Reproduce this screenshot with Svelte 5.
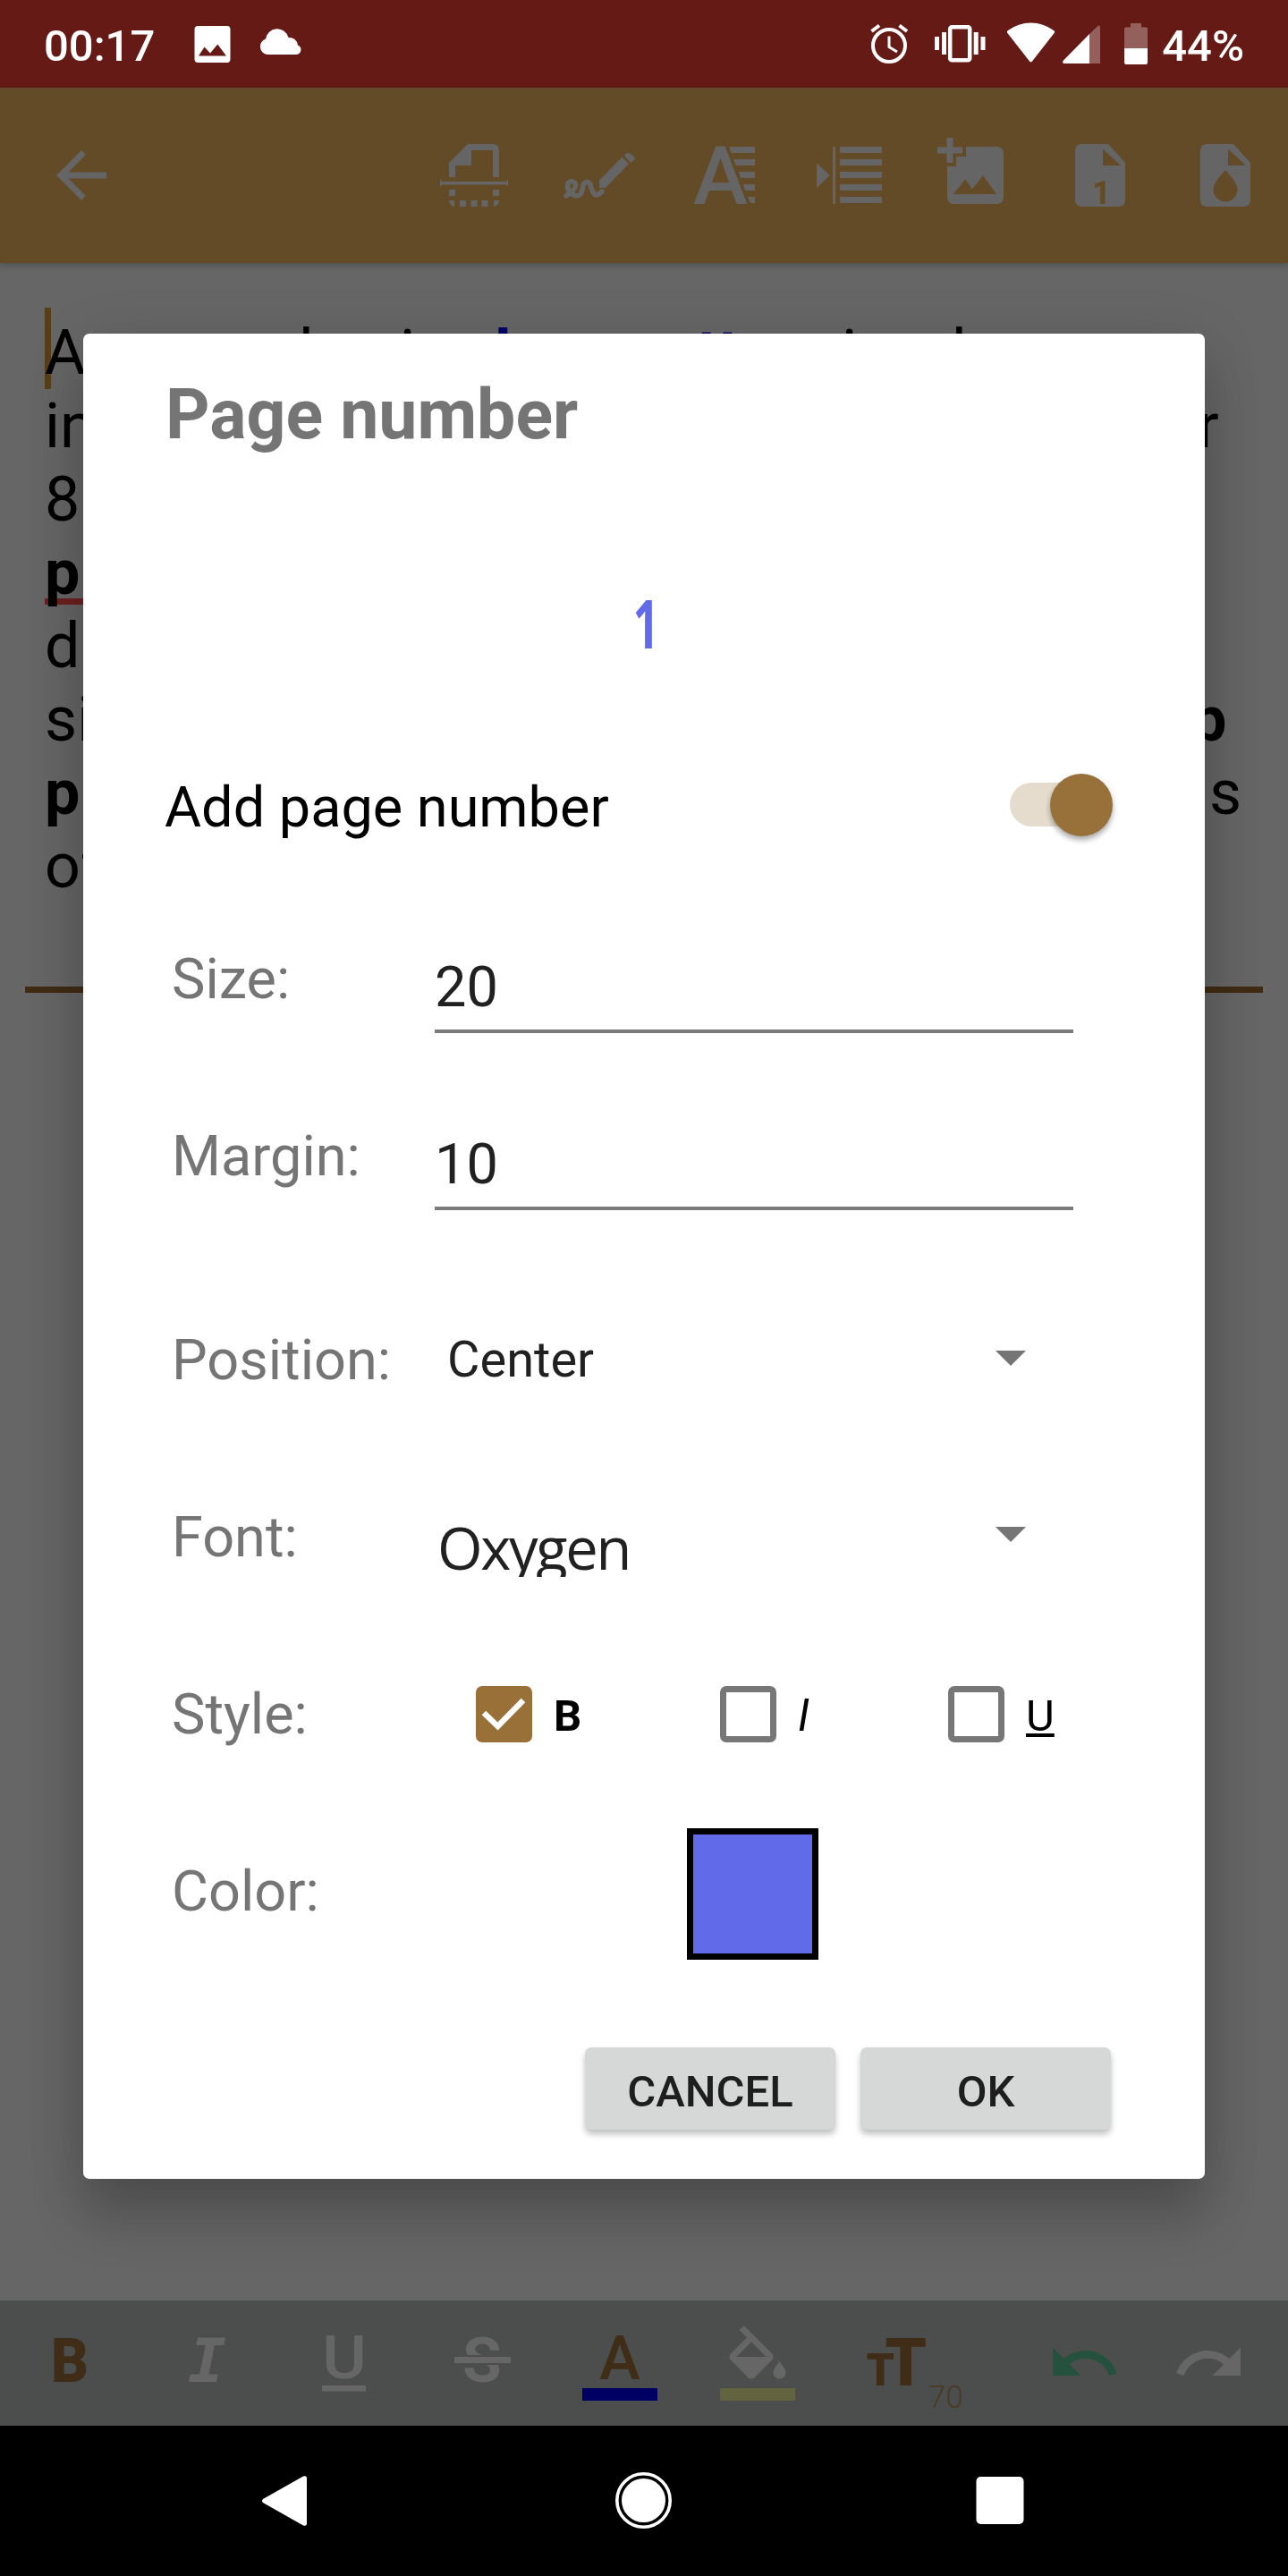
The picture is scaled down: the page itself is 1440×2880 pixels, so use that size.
<script lang="ts">
  let addNumber = true;
  let size = "20";
  let margin = "10";
  let position = "Center";
  let font = "Oxygen";
  let color = "#616bea";
  let styles = [
    { label: "B", cls: "bold", checked: true },
    { label: "I", cls: "italic", checked: false },
    { label: "U", cls: "underline", checked: false },
  ];

  // x is where each piece of a line starts on the page
  const lines = [
    [
      { x: 50, text: "A" },
      { x: 311, text: "d" },
      { x: 447, text: "i" },
      { x: 553, text: "l", cls: "link" },
      { x: 779, text: "tt", cls: "link" },
      { x: 941, text: "i" },
      { x: 1041, text: "d" },
    ],
    [{ x: 50, text: "in" }, { x: 1339, text: "r" }],
    [{ x: 50, text: "8" }],
    [{ x: 50, text: "p\u00a0", cls: "strong typo" }],
    [{ x: 50, text: "d" }],
    [{ x: 50, text: "si" }, { x: 1332, text: "p", cls: "strong" }],
    [{ x: 50, text: "p", cls: "strong" }, { x: 1352, text: "s" }],
    [{ x: 50, text: "of" }],
  ];
</script>

<div class="screen">
  <header class="status">
    <span class="clock">00:17</span>
    <svg class="picture" width="42" height="58" viewBox="216 20 42 58">
      <path fill-rule="evenodd" d="M221.500 29H253.500a4 4 0 0 1 4 4V66a4 4 0 0 1-4 4H221.500a4 4 0 0 1-4-4V33a4 4 0 0 1 4-4zM222 62.500H253L243.300 49.500L235 59.500L228.600 52.500z" />
    </svg>
    <svg class="cloud" width="50" height="58" viewBox="290 20 50 58">
      <path d="M299 61a9 9 0 0 1-2-17.500a13 13 0 0 1 25.500-1.500a9.500 9.500 0 0 1 10.500 8.500a5.500 5.500 0 0 1-1 10.500z" />
    </svg>
    <div class="system">
      <svg width="44" height="58" viewBox="972 20 44 58">
        <g fill="none" stroke="#fff" stroke-width="4">
          <circle cx="994" cy="51" r="18" />
          <path d="M974.500 35L983 28.500M1014 35L1005.500 28.500" />
          <path stroke-width="3" d="M994 40.500V52.500L1003 58" />
        </g>
      </svg>
      <svg width="58" height="58" viewBox="1044 20 58 58">
        <rect x="1062.200" y="30.200" width="22" height="37" rx="2" fill="none" stroke="#fff" stroke-width="4.500" />
        <path d="M1053 36h5v25h-5zM1045 41h5v15h-5zM1088.700 36h5v25h-5zM1096.500 41h5v15h-5z" />
      </svg>
      <svg width="56" height="58" viewBox="1125 20 56 58">
        <path d="M1154 68.500a2 2 0 0 1-3 0L1126 36.500q-.5-1.500 1-2.500a43 43 0 0 1 51 0q1.500 1 1 2.500z" />
      </svg>
      <svg width="43" height="58" viewBox="1187 20 43 58">
        <path fill="#93605c" d="M1218 38L1228 28.500q2 0 2 2V71h-12z" />
        <path d="M1218 38V71H1189.500q-2-.5-1-3z" />
      </svg>
      <svg width="27" height="58" viewBox="1257 20 27 58">
        <path fill="#93605c" d="M1264 26h12v4.500h5.500q1.500 0 1.500 1.500v22.500h-26v-22.500q0-1.500 1.500-1.500h5.500z" />
        <path d="M1257 54h26v16q0 2-2 2h-22q-2 0-2-2z" />
      </svg>
      <span class="battery">44%</span>
    </div>
  </header>

  <nav class="toolbar">
    <svg class="back" viewBox="0 0 24 24"><path d="M20 11H7.830l5.590-5.590L12 4l-8 8 8 8 1.410-1.410L7.830 13H20z" /></svg>
    <svg viewBox="0 0 84 84">
      <path d="M14 44V28L35 7H63a7 7 0 0 1 7 7V44H63V14H39V31H21V44z" />
      <path d="M4 47h1.500v2h73v-2h1.500v7h-1.500v-1.500h-73v1.500h-1.500zM14 58h7v7h-7zM63 58h7v7h-7zM14 70h6v7a7 7 0 0 1-6-7zM26 70h7v7h-7zM38.500 70h7v7h-7zM50.500 70h7v7h-7zM64 70h6a7 7 0 0 1-6 7z" />
    </svg>
    <svg viewBox="0 0 84 84">
      <path d="M42 47.500L67.500 21.500L75 29L49 56H42zM69.500 19.500L74 16.500Q82 20 82 24L77 28z" />
      <path fill="none" stroke="#656565" stroke-width="5.500" stroke-linecap="round" d="M5 65Q18 56 15 51Q11 46 7 51Q5 57 10 61Q16 68 21 63Q23 60 24 53Q28 46 32 52Q34 62 38 64Q42 64 45 60" />
    </svg>
    <svg viewBox="0 0 84 84">
      <text x="7" y="74" font-size="91" font-weight="500" textLength="61" lengthAdjust="spacingAndGlyphs">A</text>
      <path d="M47 10H76V17H49.500zM52 24H76V31H54.500zM58 38H76V45H60zM63 52H76V59H65zM68 66H76V73H71z" />
    </svg>
    <svg viewBox="0 0 84 84">
      <path d="M5 28.500L20 42L5 56zM23 10h3v64h-3zM31 10H78V17H31zM31 24H78V31H31zM31 38H78V45H31zM31 52H78V59H31zM31 66H78V73H31z" />
    </svg>
    <svg viewBox="0 0 84 84">
      <path d="M10.500 0h7v10.500h10.500v7H17.500V28h-7V17.500H0v-7h10.500z" />
      <path fill-rule="evenodd" d="M32 10H67a7 7 0 0 1 7 7V67a7 7 0 0 1-7 7H18a7 7 0 0 1-7-7V32H21V21H32zM18 63H66L51 42L39 57.500L31 46.500z" />
    </svg>
    <svg viewBox="0 0 84 84">
      <path fill-rule="evenodd" d="M21 7H51L70 28V70a7 7 0 0 1-7 7H21a7 7 0 0 1-7-7V14a7 7 0 0 1 7-7zM45 12.500V31H65z" />
      <text class="page-digit" x="33" y="73.500" font-size="37" font-weight="700">1</text>
    </svg>
    <svg viewBox="0 0 84 84">
      <path fill-rule="evenodd" d="M21 7H51L70 28V70a7 7 0 0 1-7 7H21a7 7 0 0 1-7-7V14a7 7 0 0 1 7-7zM45 12.500V31H65zM42 36C36 43 28.500 51 28.500 58a13.500 13.500 0 0 0 27 0C55.500 51 48 43 42 36z" />
    </svg>
  </nav>

  <main class="page">
    <div class="caret"></div>
    {#each lines as line}
      <p class="line">
        {#each line as part}
          <span class={part.cls ?? ""} style="margin-left: {part.x}px">{part.text}</span>
        {/each}
      </p>
    {/each}
    <hr />
  </main>

  <footer class="format">
    <svg class="on" viewBox="0 0 84 84"><text x="22" y="63" font-size="69" font-weight="900" textLength="42" lengthAdjust="spacingAndGlyphs">B</text></svg>
    <svg viewBox="0 0 84 84"><text class="mono" x="21" y="63" font-size="67" textLength="43" lengthAdjust="spacingAndGlyphs">I</text></svg>
    <svg viewBox="0 0 84 84">
      <text x="17" y="59" font-size="67" font-weight="500" textLength="50" lengthAdjust="spacingAndGlyphs">U</text>
      <rect x="17" y="67" width="49" height="6.500" />
    </svg>
    <svg viewBox="0 0 84 84">
      <text x="20" y="62.500" font-size="71" font-weight="700">S</text>
      <rect class="gap" x="11" y="33" width="63" height="11" />
      <rect x="11" y="35" width="63" height="7" />
    </svg>
    <svg class="on" viewBox="0 0 84 84">
      <text x="19" y="60" font-size="69" font-weight="500">A</text>
      <rect fill="#000064" y="70" width="84" height="14" />
    </svg>
    <svg viewBox="0 0 84 84">
      <path transform="scale(3.500)" d="M16.560 8.940L7.620 0 6.210 1.410l2.380 2.380-5.150 5.150c-.59.59-.59 1.540 0 2.120l5.500 5.500c.29.29.68.44 1.060.44s.77-.15 1.060-.44l5.500-5.500c.59-.58.59-1.530 0-2.120zM5.210 10L10 5.210 14.790 10H5.210zM19 11.500s-2 2.170-2 3.500c0 1.100.9 2 2 2s2-.9 2-2c0-1.330-2-3.500-2-3.500z" />
      <rect fill="#626440" y="70" width="84" height="14" />
    </svg>
    <svg class="on" viewBox="0 0 84 84">
      <text x="9.500" y="67" font-size="50" font-weight="900">T</text>
      <text x="30.500" y="67" font-size="74" font-weight="900">T</text>
      <text class="pt" x="79" y="92" font-size="35" font-weight="300">70</text>
    </svg>
    <svg class="undo" viewBox="0 0 24 24"><path d="M12.500 8c-2.650 0-5.050.99-6.900 2.600L2 7v9h9l-3.620-3.620c1.390-1.160 3.160-1.880 5.120-1.880 3.540 0 6.550 2.310 7.600 5.500l2.370-.78C21.080 11.030 17.150 8 12.500 8z" /></svg>
    <svg class="redo" viewBox="0 0 24 24"><path d="M18.400 10.600C16.550 8.990 14.150 8 11.500 8c-4.650 0-8.580 3.030-9.960 7.220L3.900 16c1.050-3.190 4.050-5.500 7.600-5.500 1.950 0 3.730.72 5.120 1.880L13 16h9V7l-3.600 3.600z" /></svg>
  </footer>

  <div class="nav">
    <svg viewBox="0 0 64 64"><path d="M5 30L50 4.500q4-1 4 2V57.500q0 3-4 2L5 34q-2-2 0-4z" /></svg>
    <svg viewBox="0 0 64 64">
      <circle cx="31.500" cy="31.500" r="29.700" fill="none" stroke="#fff" stroke-width="3.600" />
      <circle cx="31.500" cy="31.500" r="24.500" />
    </svg>
    <svg viewBox="0 0 64 64"><rect x="4.500" y="5" width="53" height="53" rx="5" /></svg>
  </div>

  <div class="dialog">
    <h1>Page number</h1>
    <div class="preview" style="color: {color}"><span>1</span></div>

    <div class="switch-row">
      <span>Add page number</span>
      <button class="switch" class:checked={addNumber} aria-label="Add page number" on:click={() => (addNumber = !addNumber)}>
        <span class="thumb"></span>
      </button>
    </div>

    <div class="form">
      <div class="row">
        <span class="label">Size:</span>
        <input bind:value={size} aria-label="Size" />
      </div>
      <div class="row">
        <span class="label">Margin:</span>
        <input bind:value={margin} aria-label="Margin" />
      </div>
      <div class="row position">
        <span class="label">Position:</span>
        <div class="select">
          <span>{position}</span>
          <i class="arrow"></i>
        </div>
      </div>
      <div class="row">
        <span class="label">Font:</span>
        <div class="select font">
          <span class="font-name">{font}</span>
          <i class="arrow"></i>
        </div>
      </div>
      <div class="row">
        <span class="label">Style:</span>
        <div class="checks">
          {#each styles as style}
            <button class="check" on:click={() => (style.checked = !style.checked)}>
              <span class="box" class:checked={style.checked}>
                {#if style.checked}
                  <svg viewBox="0 0 63 63"><path d="M9 30L24.500 45L53 16" /></svg>
                {/if}
              </span>
              <span class={style.cls}>{style.label}</span>
            </button>
          {/each}
        </div>
      </div>
      <div class="row">
        <span class="label">Color:</span>
        <div class="swatch" style="background: {color}"></div>
      </div>
    </div>

    <div class="actions">
      <button>CANCEL</button>
      <button>OK</button>
    </div>
  </div>
</div>

<style>
  :global(body) {
    background: #000;
  }

  .screen {
    position: relative;
    box-sizing: border-box;
    display: flex;
    flex-direction: column;
    width: 1440px;
    height: 2880px;
    overflow: hidden;
    font-family: Roboto, sans-serif;
  }

  svg {
    display: block;
    flex: none;
  }

  button {
    border: 0;
    padding: 0;
    background: none;
    font-family: inherit;
  }

  .status {
    display: flex;
    align-items: center;
    height: 98px;
    flex: none;
    padding: 0 49px;
    box-sizing: border-box;
    background: #661a15;
    color: #fff;
    font-size: 49px;
    font-weight: 500;
  }

  .status svg {
    fill: #fff;
  }

  .clock {
    width: 167px;
    padding-top: 5px;
  }

  .cloud {
    margin-left: 32px;
  }

  .system {
    display: flex;
    align-items: center;
    margin-left: auto;
  }

  .system svg:nth-child(2) {
    margin-left: 28px;
  }

  .system svg:nth-child(3) {
    margin-left: 23px;
  }

  .system svg:nth-child(4) {
    margin-left: 6px;
  }

  .system svg:nth-child(5) {
    margin-left: 27px;
  }

  .battery {
    margin-left: 15px;
    padding-top: 5px;
  }

  .toolbar {
    display: flex;
    align-items: center;
    justify-content: flex-end;
    gap: 56px;
    height: 196px;
    flex: none;
    padding: 0 28px 0 49px;
    background: #644b28;
    box-shadow: 0 2px 8px rgba(0, 0, 0, 0.25);
    z-index: 1;
  }

  .toolbar svg {
    width: 84px;
    height: 84px;
    fill: #656565;
  }

  .toolbar .back {
    margin-right: auto;
  }

  .toolbar .page-digit {
    fill: #644b28;
  }

  .page {
    position: relative;
    flex: 1;
    padding-top: 59px;
    background: #666;
  }

  .caret {
    position: absolute;
    left: 50px;
    top: 50px;
    width: 7px;
    height: 91px;
    background: #573f1b;
  }

  .line {
    position: relative;
    display: grid;
    margin: 0;
    height: 82px;
    font-size: 70px;
    line-height: 82px;
    color: #000;
  }

  .line span {
    grid-area: 1 / 1;
    justify-self: start;
  }

  .line .link {
    color: #000066;
    font-weight: 700;
  }

  .line .strong {
    font-weight: 700;
  }

  .line .typo {
    text-decoration: underline #6d2020 7px;
    text-underline-offset: 5px;
    text-decoration-skip-ink: none;
  }

  hr {
    height: 7px;
    margin: 94px 28px 0;
    border: 0;
    background: #402c14;
  }

  .format {
    display: flex;
    gap: 70px;
    height: 112px;
    flex: none;
    padding: 28px 35px 0;
    background: #4b4e4c;
  }

  .format svg {
    width: 84px;
    height: 84px;
    overflow: visible;
    fill: #666;
  }

  .format .on {
    fill: #402d17;
  }

  .format .gap {
    fill: #4b4e4c;
  }

  .format .pt {
    fill: #4a3b25;
  }

  .format .mono {
    font-family: "DejaVu Sans Mono", monospace;
    font-weight: 700;
    font-style: italic;
  }

  .format .undo {
    margin-left: 57px;
    fill: #25523e;
  }

  .format .redo {
    margin-left: -14px;
  }

  .nav {
    display: flex;
    align-items: center;
    justify-content: center;
    gap: 335px;
    height: 168px;
    flex: none;
    background: #000;
  }

  .nav svg {
    width: 64px;
    height: 64px;
    fill: #fff;
  }

  .dialog {
    position: absolute;
    z-index: 2;
    left: 93px;
    top: 373px;
    width: 1254px;
    height: 2063px;
    box-sizing: border-box;
    padding: 46px 102px 0 92px;
    border-radius: 7px;
    background: #fff;
    box-shadow: 0 44px 60px rgba(0, 0, 0, 0.2), 0 10px 70px rgba(0, 0, 0, 0.1);
  }

  h1 {
    margin: 0;
    height: 90px;
    font-size: 77px;
    font-weight: 700;
    line-height: 90px;
    color: #757575;
  }

  .preview {
    height: 357px;
    padding-top: 132px;
    box-sizing: border-box;
    margin-left: 14px;
    font-family: "Open Sans", sans-serif;
    font-size: 75px;
    font-weight: 700;
    line-height: 110px;
    text-align: center;
  }

  .preview span {
    display: inline-block;
    transform: scaleX(0.68);
  }

  .switch-row {
    display: flex;
    justify-content: space-between;
    height: 74px;
    margin-left: -1px;
    padding-right: 4px;
    font-size: 63px;
    line-height: 74px;
    color: #000;
  }

  .switch {
    display: flex;
    align-items: center;
    width: 112px;
    height: 49px;
    margin: 9px 0 0;
    border-radius: 25px;
    background: #bbb;
  }

  .switch.checked {
    justify-content: flex-end;
    background: linear-gradient(to right, #e5dccd 100px, #fff 100px);
  }

  .thumb {
    width: 70px;
    height: 70px;
    margin: 0 -3px 0 0;
    border-radius: 50%;
    background: #98713a;
    box-shadow: 0 4px 6px rgba(0, 0, 0, 0.35);
  }

  .form {
    margin-top: 56px;
  }

  .row {
    display: flex;
    align-items: center;
    height: 198px;
  }

  .row.position {
    margin-top: 30px;
  }

  .label {
    width: 294px;
    padding-left: 7px;
    flex: none;
    font-size: 63px;
    line-height: 74px;
    color: #757575;
  }

  input {
    box-sizing: border-box;
    width: 714px;
    height: 88px;
    margin-top: 31px;
    padding: 0 0 10px;
    border: 0;
    border-bottom: 4px solid #7b7b7b;
    border-radius: 0;
    background: transparent;
    color: #212121;
    font-family: inherit;
    font-size: 63px;
    line-height: 74px;
    outline: none;
  }

  .select {
    display: flex;
    align-items: center;
    justify-content: space-between;
    width: 647px;
    margin: -3px 0 0 14px;
    color: #212121;
    font-size: 56px;
    line-height: 66px;
  }

  .font-name {
    height: 61px;
    margin: 29px 0 0 -11px;
    overflow: hidden;
    font-family: "Open Sans", sans-serif;
    font-size: 65px;
    letter-spacing: -2.3px;
    line-height: 57px;
  }

  .arrow {
    align-self: flex-start;
    margin-top: 23px;
    border: 17px solid transparent;
    border-top-color: #757575;
    border-bottom: 0;
  }

  .font .arrow {
    margin-top: 34px;
  }

  .checks {
    display: grid;
    grid-template-columns: 273px 255px 130px;
    margin: -2px 0 0 46px;
  }

  .check {
    display: flex;
    align-items: center;
    gap: 24px;
    color: #000;
    font-size: 49px;
    line-height: 58px;
  }

  .check span:last-child {
    padding-top: 5px;
  }

  .box {
    box-sizing: border-box;
    width: 63px;
    height: 63px;
    border: 7px solid #777;
    border-radius: 7px;
  }

  .box.checked {
    border: 0;
    background: #9a7039;
  }

  .box path {
    fill: none;
    stroke: #fff;
    stroke-width: 6.5;
  }

  .bold {
    font-weight: 700;
  }

  .italic {
    font-style: italic;
  }

  .underline {
    text-decoration: underline;
  }

  .swatch {
    box-sizing: border-box;
    width: 147px;
    height: 147px;
    margin: 4px 0 0 282px;
    border: 7px solid #000;
  }

  .actions {
    display: flex;
    justify-content: flex-end;
    gap: 28px;
    margin-top: 75px;
    margin-right: 3px;
  }

  .actions button {
    width: 280px;
    height: 92px;
    padding-top: 6px;
    border-radius: 7px;
    background: #d6d8d7;
    box-shadow: 0 5px 7px rgba(0, 0, 0, 0.25);
    color: #1e1e1e;
    font-size: 49px;
    font-weight: 500;
  }
</style>
